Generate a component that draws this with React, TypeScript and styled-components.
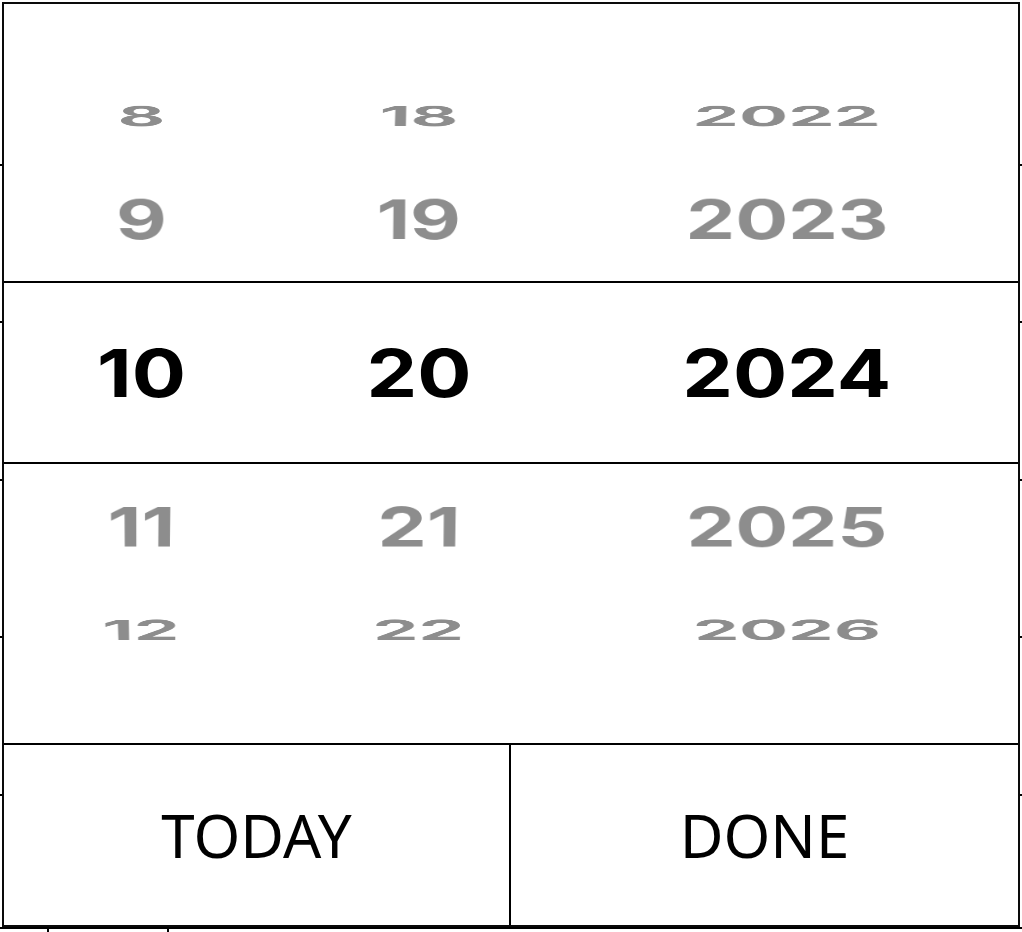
import React from 'react';
import styled, { createGlobalStyle } from 'styled-components';

// wheel geometry, tuned against the reference
const RADIUS = 361;
const STEP = 26;

type WheelColumn = {
    values: number[]
    selected: number
}

const columns: WheelColumn[] = [
    {values: [7, 8, 9, 10, 11, 12], selected: 10},
    {values: [17, 18, 19, 20, 21, 22, 23], selected: 20},
    {values: [2021, 2022, 2023, 2024, 2025, 2026, 2027], selected: 2024},
];

const GlobalStyle = createGlobalStyle`
  html, body {
    margin: 0;
    padding: 0;
    background: #fff;
  }
  body {
    width: 1022px;
    height: 932px;
    overflow: hidden;
    font-family: "Liberation Sans", Arial, sans-serif;
  }
`

const Page = styled.div`
  position: relative;
  width: 1022px;
  height: 932px;
  overflow: hidden;
`

// calendar behind the picker, only its edges peek out
const Backdrop = styled.div`
  display: flex;
  flex-direction: column;
`
const BackdropRow = styled.div<{ $h: number }>`
  flex-shrink: 0;
  height: ${props => props.$h}px;
  border-bottom: 2px solid #000;
`
const BackdropFoot = styled.div`
  display: flex;
  height: 4px;
`
const BackdropCell = styled.div<{ $w: number }>`
  flex-shrink: 0;
  width: ${props => props.$w}px;
  border-right: 2px solid #000;
`

const Modal = styled.div`
  position: absolute;
  top: 2px;
  left: 2px;
  width: 1018px;
  height: 925px;
  box-sizing: border-box;
  border: 2px solid #0a0a0a;
  background: #fff;
  display: flex;
  flex-direction: column;
`

const Wheels = styled.div`
  position: relative;
  flex-shrink: 0;
  height: 739px;
  box-sizing: border-box;
  padding: 75px 0 77px;
  display: grid;
  grid-template-columns: 274px 282px 454px;
`

const Band = styled.div`
  position: absolute;
  left: 0;
  right: 0;
  top: 277px;
  height: 183px;
  box-sizing: border-box;
  border-top: 2px solid #000;
  border-bottom: 2px solid #000;
  pointer-events: none;
`

const Column = styled.div`
  position: relative;
  overflow: hidden;
  perspective: 1300px;
`

const Cylinder = styled.div`
  position: absolute;
  inset: 0;
  transform-style: preserve-3d;
  transform: translateZ(-${RADIUS}px);
`

const Item = styled.div<{ $angle: number; $active: boolean }>`
  position: absolute;
  left: 0;
  right: 0;
  top: 50%;
  height: 80px;
  margin-top: -40px;
  line-height: 80px;
  text-align: center;
  font-family: Inter, "Liberation Sans", sans-serif;
  font-weight: 700;
  font-size: 66px;
  color: ${props => props.$active ? '#000' : '#8d8d8d'};
  backface-visibility: hidden;
  transform: rotateX(${props => props.$angle}deg) translateZ(${RADIUS}px);
`

const Digits = styled.span`
  display: inline-block;
  transform: scaleX(1.22);
`

const Footer = styled.div`
  flex: 1;
  display: grid;
  grid-template-columns: 1fr 1fr;
  border-top: 2px solid #000;
`

const FooterButton = styled.button<{ $divider?: boolean }>`
  border: none;
  border-right: ${props => props.$divider ? '2px solid #000' : 'none'};
  background: none;
  padding: 0;
  margin: 0;
  font-family: "Noto Sans", "Open Sans", sans-serif;
  font-size: 60px;
  font-weight: 400;
  color: #000;
  cursor: pointer;
`

const Wheel = (props: { column: WheelColumn }) => {
    const centre = props.column.values.indexOf(props.column.selected);
    return (
        <Column>
            <Cylinder>
                {props.column.values.map((v, i) => (
                    <Item key={v} $angle={-(i - centre) * STEP} $active={v === props.column.selected}>
                        <Digits>{v}</Digits>
                    </Item>
                ))}
            </Cylinder>
        </Column>
    )
};

export default function App() {
    return (
        <Page>
            <GlobalStyle/>
            <Backdrop>
                <BackdropRow $h={164}/>
                <BackdropRow $h={155}/>
                <BackdropRow $h={156}/>
                <BackdropRow $h={155}/>
                <BackdropRow $h={156}/>
                <BackdropRow $h={131}/>
                <BackdropFoot>
                    <BackdropCell $w={47}/>
                    <BackdropCell $w={118}/>
                </BackdropFoot>
            </Backdrop>
            <Modal>
                <Wheels>
                    {columns.map((c, i) => <Wheel key={i} column={c}/>)}
                    <Band/>
                </Wheels>
                <Footer>
                    <FooterButton $divider>TODAY</FooterButton>
                    <FooterButton>DONE</FooterButton>
                </Footer>
            </Modal>
        </Page>
    )
}
